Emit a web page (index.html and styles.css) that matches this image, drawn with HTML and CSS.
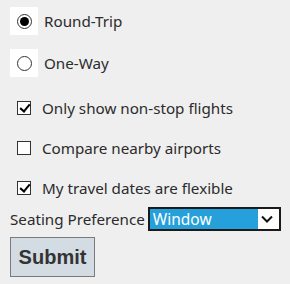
FILE: index.html
```html
<!DOCTYPE html>
<html lang="en">
<head>
<meta charset="UTF-8" />
<meta name="viewport" content="width=device-width, initial-scale=1" />
<title>Flight Search Options</title>
<link rel="stylesheet" href="styles.css">
</head>
<body>

<form class="options">
  <label class="radio-row">
    <span class="radio-box"><input type="radio" name="trip" value="round" checked></span>
    Round-Trip
  </label>
  <label class="radio-row">
    <span class="radio-box"><input type="radio" name="trip" value="oneway"></span>
    One-Way
  </label>

  <div class="checks">
    <label class="check-row">
      <input type="checkbox" checked>
      Only show non-stop flights
    </label>
    <label class="check-row">
      <input type="checkbox">
      Compare nearby airports
    </label>
    <label class="check-row">
      <input type="checkbox" checked>
      My travel dates are flexible
    </label>
  </div>

  <div class="seat-row">
    <label for="seat">Seating Preference</label>
    <div class="select" id="seat">
      <span class="select-value">Window</span>
      <svg class="chevron" width="12" height="8" viewBox="0 0 12 8"><path d="M1 1.5 L6 6.5 L11 1.5" fill="none" stroke="#111" stroke-width="2"/></svg>
    </div>
  </div>

  <button type="button" class="submit">Submit</button>
</form>

</body>
</html>
```

FILE: styles.css
```css
body {
  margin: 0;
  background: #efefef;
  color: #2b2b2b;
  font-family: "Noto Sans", "Open Sans", sans-serif;
  font-size: 15.2px;
}
.options {
  display: flex;
  flex-direction: column;
  padding: 7px 0 0 10px;
}
.radio-row {
  display: flex;
  align-items: center;
  gap: 6px;
  height: 28px;
  margin-bottom: 14px;
}
.radio-box {
  width: 28px;
  height: 28px;
  background: #fff;
  display: flex;
  align-items: center;
  justify-content: center;
}
.radio-box input {
  appearance: none;
  margin: 0;
  width: 15px;
  height: 15px;
  border: 1px solid #333;
  border-radius: 50%;
  background: #fff;
  display: flex;
  align-items: center;
  justify-content: center;
}
.radio-box input:checked::after {
  content: "";
  width: 9px;
  height: 9px;
  border-radius: 50%;
  background: #000;
}
.checks {
  display: flex;
  flex-direction: column;
  gap: 14px;
  margin-top: 4px;
}
.check-row {
  display: flex;
  align-items: center;
  gap: 11px;
  height: 26px;
  padding-left: 7px;
}
.check-row input {
  appearance: none;
  margin: 0;
  width: 14px;
  height: 14px;
  border: 1px solid #333;
  background: #fff;
  position: relative;
}
.check-row input:checked::after {
  content: "";
  position: absolute;
  left: 3.5px;
  top: 0px;
  width: 4px;
  height: 8px;
  border: solid #000;
  border-width: 0 2.5px 2.5px 0;
  transform: rotate(40deg);
}
.seat-row {
  display: flex;
  align-items: center;
  gap: 3px;
  margin-top: 6px;
  height: 24px;
}
.select {
  width: 123px;
  height: 20px;
  border: 2px solid #1a1a1a;
  background: #fff;
  display: flex;
  align-items: center;
  justify-content: space-between;
  padding-right: 6px;
}
.select-value {
  background: #26a0da;
  color: #fff;
  width: 108px;
  height: 20px;
  line-height: 20px;
  padding-left: 3px;
  font-size: 15.5px;
  box-sizing: border-box;
}
.submit {
  align-self: flex-start;
  margin-top: 6px;
  width: 85px;
  height: 40px;
  background: #d3dce3;
  border: 1px solid #7a7a7a;
  border-radius: 0;
  font-family: "Liberation Sans", Arial, sans-serif;
  font-weight: bold;
  font-size: 20px;
  color: #333;
}
```
